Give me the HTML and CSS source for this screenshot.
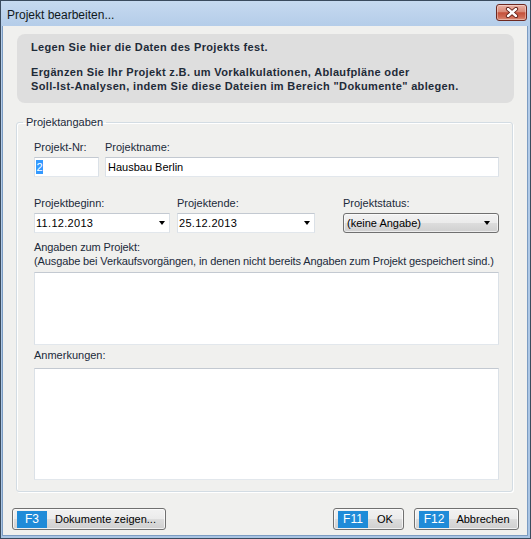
FILE: index.html
```html
<!DOCTYPE html>
<html lang="de">
<head>
<meta charset="utf-8">
<title>Projekt bearbeiten...</title>
<link rel="stylesheet" href="styles.css">
</head>
<body>
<div class="window">
  <div class="titlebar">
    <span class="title">Projekt bearbeiten...</span>
    <button class="close" type="button" aria-label="Schließen">
      <svg width="14" height="11" viewBox="0 0 14 11">
        <path d="M3 2 L11 9 M11 2 L3 9" stroke="#5b1a12" stroke-width="4.2" stroke-linecap="round"/>
        <path d="M3 2 L11 9 M11 2 L3 9" stroke="#ffffff" stroke-width="2.4" stroke-linecap="round"/>
      </svg>
    </button>
  </div>
  <div class="client">
    <div class="info">
      <p>Legen Sie hier die Daten des Projekts fest.</p>
      <p>Ergänzen Sie Ihr Projekt z.B. um Vorkalkulationen, Ablaufpläne oder<br>Soll-Ist-Analysen, indem Sie diese Dateien im Bereich "Dokumente" ablegen.</p>
    </div>
    <fieldset class="group">
      <legend>Projektangaben</legend>
      <div class="group-body">
        <div class="row">
          <div class="field f-nr">
            <span class="label">Projekt-Nr:</span>
            <div class="input pad1"><span class="sel">2</span></div>
          </div>
          <div class="field f-name">
            <span class="label">Projektname:</span>
            <div class="input pad2">Hausbau Berlin</div>
          </div>
        </div>
        <div class="row row-2">
          <div class="field f-begin">
            <span class="label">Projektbeginn:</span>
            <div class="input date">11.12.2013<span class="arrow"></span></div>
          </div>
          <div class="field f-end">
            <span class="label">Projektende:</span>
            <div class="input date">25.12.2013<span class="arrow"></span></div>
          </div>
          <div class="field f-status">
            <span class="label">Projektstatus:</span>
            <div class="combo">(keine Angabe)<span class="arrow"></span></div>
          </div>
        </div>
        <div class="block block-1">
          <span class="label two">Angaben zum Projekt:<br>(Ausgabe bei Verkaufsvorgängen, in denen nicht bereits Angaben zum Projekt gespeichert sind.)</span>
          <div class="textarea ta-1"></div>
        </div>
        <div class="block block-2">
          <span class="label lab-notes">Anmerkungen:</span>
          <div class="textarea ta-2"></div>
        </div>
      </div>
    </fieldset>
    <div class="footer">
      <button class="btn btn-docs" type="button"><span class="key">F3</span><span class="btn-text">Dokumente zeigen...</span></button>
      <span class="spacer"></span>
      <button class="btn btn-ok" type="button"><span class="key">F11</span><span class="btn-text">OK</span></button>
      <button class="btn btn-cancel" type="button"><span class="key">F12</span><span class="btn-text">Abbrechen</span></button>
    </div>
  </div>
</div>
</body>
</html>
```
FILE: styles.css
```css
html, body {
  margin: 0;
  padding: 0;
  background: #ffffff;
}
body {
  font-family: "Liberation Sans", Arial, sans-serif;
  font-size: 11px;
  color: #1b2a3a;
}
.window {
  width: 531px;
  height: 539px;
  box-sizing: border-box;
  border: 1px solid #3a4b5e;
  background: linear-gradient(#c6daf0, #b5cde9 24px, #a9c4e3);
  display: flex;
  flex-direction: column;
  overflow: hidden;
}
.titlebar {
  height: 25px;
  flex: none;
  display: flex;
  justify-content: space-between;
  align-items: flex-start;
  padding: 0 3px 0 6px;
}
.title {
  font-size: 12px;
  line-height: 24px;
  padding-top: 2px;
  color: #101820;
}
.close {
  margin-top: 3px;
  width: 31px;
  height: 17px;
  box-sizing: border-box;
  padding: 0;
  border: 1px solid #6e2820;
  border-radius: 3px;
  background: linear-gradient(#eab1a4, #d98a78 45%, #c4503a 52%, #cf6a54 80%, #dc8e78);
  display: flex;
  align-items: center;
  justify-content: center;
  box-shadow: inset 0 0 0 1px rgba(255,255,255,0.35);
}
.client {
  flex: 1;
  min-height: 0;
  margin: 0 2px 2px 1px;
  border: 1px solid #7c9cc2;
  border-top: none;
  background: #f0f0ee;
  display: flex;
  flex-direction: column;
}
.info {
  margin: 8px 13px 0 14px;
  height: 69px;
  flex: none;
  box-sizing: border-box;
  padding: 6px 14px 0;
  background: #dedede;
  border-radius: 8px;
  font-weight: bold;
  color: #1e2b38;
  line-height: 14px;
  letter-spacing: 0.35px;
  white-space: nowrap;
}
.info p {
  margin: 0;
}
.info p + p {
  margin-top: 11px;
}
.group {
  margin: 12px 14px 0 13px;
  padding: 0;
  border: 1px solid #d3dce3;
  border-radius: 3px;
  box-shadow: inset 1px 1px 0 #ffffff, 1px 1px 0 #ffffff;
  min-width: 0;
  flex: none;
}
.group legend {
  margin-left: 6px;
  padding: 0 3px;
  line-height: 14px;
  color: #1b2a3a;
}
.group-body {
  padding: 12px 13px 11px 17px;
}
.row {
  display: flex;
}
.row-2 {
  margin-top: 20px;
}
.field {
  display: flex;
  flex-direction: column;
}
.label {
  display: block;
  line-height: 13px;
  margin-bottom: 3px;
  color: #1b2a3a;
  white-space: nowrap;
}
.label.two {
  line-height: 14px;
  margin-bottom: 4px;
  letter-spacing: -0.12px;
}
.f-nr { width: 65px; margin-right: 6px; }
.f-name { flex: 1; }
.f-begin { width: 136px; margin-right: 7px; }
.f-end { width: 138px; margin-right: 28px; }
.f-status { flex: 1; }
.input, .textarea {
  box-sizing: border-box;
  background: #ffffff;
  border: 1px solid;
  border-color: #c3c9d1 #dbe1e7 #e2e7ec #dbe1e7;
  color: #000000;
}
.input {
  height: 20px;
  display: flex;
  align-items: center;
  line-height: 14px;
}
.pad1 { padding: 0 1px; }
.pad2 { padding: 0 2px; }
.sel {
  background: #3399ff;
  color: #ffffff;
  padding: 0 0.5px;
}
.date {
  padding: 0 1px;
  letter-spacing: 0.3px;
  justify-content: space-between;
}
.arrow {
  width: 0;
  height: 0;
  border-left: 3.5px solid transparent;
  border-right: 3.5px solid transparent;
  border-top: 4px solid #000000;
  margin-right: 3px;
}
.combo {
  height: 20px;
  box-sizing: border-box;
  border: 1px solid #707070;
  border-radius: 3px;
  background: linear-gradient(#f2f2f2, #ebebeb 50%, #dddddd 50%, #cfcfcf);
  box-shadow: inset 0 0 0 1px rgba(255,255,255,0.6);
  display: flex;
  align-items: center;
  justify-content: space-between;
  padding: 0 5px 0 3px;
  color: #000000;
}
.block-1 {
  margin-top: 7px;
}
.block-2 {
  margin-top: 4px;
}
.lab-notes {
  margin-bottom: 6px;
}
.ta-1 { height: 73px; }
.ta-2 { height: 112px; }
.footer {
  display: flex;
  flex: none;
  margin-top: 16px;
  padding: 0 8px 0 9px;
}
.spacer { flex: 1; }
.btn {
  height: 22px;
  box-sizing: border-box;
  border: 1px solid #707070;
  border-radius: 3px;
  background: linear-gradient(#f2f2f2, #ebebeb 50%, #dddddd 50%, #cfcfcf);
  box-shadow: inset 0 0 0 1px rgba(255,255,255,0.7);
  display: flex;
  align-items: center;
  padding: 0 1px 0 4px;
  font-family: "Liberation Sans", Arial, sans-serif;
  font-size: 11px;
  color: #000000;
  cursor: default;
}
.btn-docs { width: 154px; }
.btn-ok { width: 71px; margin-right: 10px; }
.btn-cancel { width: 105px; }
.key {
  width: 30px;
  height: 17px;
  flex: none;
  background: #1f8bd8;
  color: #ffffff;
  font-size: 12px;
  display: flex;
  align-items: center;
  justify-content: center;
}
.btn-text {
  flex: 1;
  text-align: center;
}
```
